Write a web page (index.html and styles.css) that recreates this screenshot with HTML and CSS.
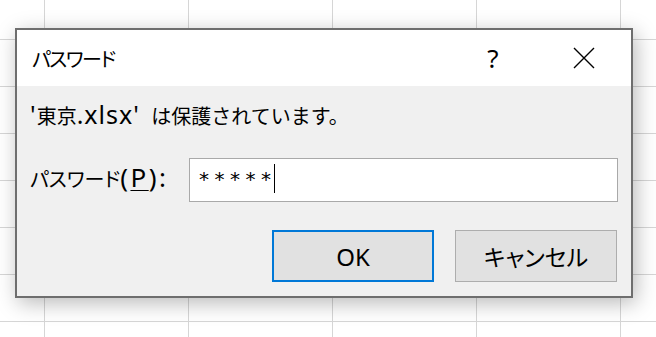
FILE: index.html
```html
<!DOCTYPE html>
<html lang="ja">
<head>
    <meta charset="utf-8">
    <link rel="stylesheet" href="styles.css">
</head>
<body>
    <div class="dialog">
        <div class="titlebar">
            <span class="title">パスワード</span>
            <span class="help">?</span>
            <span class="close">
                <svg width="22" height="22" viewBox="0 0 22 22">
                    <path d="M1 1 L21 21 M21 1 L1 21" stroke="#000" stroke-width="1.4" fill="none"/>
                </svg>
            </span>
        </div>
        <div class="content">
            <p class="message"><span class="lat">'</span>東京<span class="lat">.xlsx' </span>は保護されています。</p>
            <div class="field">
                <label class="field-label" for="pw">パスワード<span class="lat">(<u>P</u>):</span></label>
                <div class="password-box" id="pw"><span class="mask">*****</span><span class="caret"></span></div>
            </div>
            <div class="buttons">
                <button class="btn btn-default">OK</button>
                <button class="btn">キャンセル</button>
            </div>
        </div>
    </div>
</body>
</html>
```

FILE: styles.css
```css
/* Fond : grille de feuille de calcul */
html {
  background-color: #fff;
  background-image:
    linear-gradient(to right, #d6d6d6 1px, transparent 1px),
    linear-gradient(to bottom, #d6d6d6 1px, transparent 1px);
  background-size: 144px 47px;
  background-position: 44px 39px;
}

body {
  margin: 0;
  height: 337px;
  overflow: hidden;
  font-family: "Noto Sans", "Noto Sans CJK JP", sans-serif;
  color: #000;
}

/* Fenêtre */
.dialog {
  width: 618px;
  height: 270px;
  box-sizing: border-box;
  margin: 28px 0 0 15px;
  border: 2px solid #6e6e6e;
  background-color: #f0f0f0;
  display: flex;
  flex-direction: column;
  box-shadow: 3px 5px 20px rgba(0, 0, 0, 0.28);
}

/* Barre de titre */
.titlebar {
  height: 56px;
  flex: none;
  background-color: #fff;
  display: flex;
  align-items: center;
  padding: 0 24px 0 15px;
}

.title {
  flex: 1;
  font-size: 20px;
  letter-spacing: -1.5px;
  font-feature-settings: "palt";
}

.help {
  width: 40px;
  text-align: center;
  font-size: 26px;
  line-height: 30px;
}

.close {
  width: 46px;
  margin-left: 48px;
  display: flex;
  justify-content: center;
}

/* Contenu */
.content {
  flex: 1;
  padding: 17px 13px 0 13px;
}

.message {
  margin: 0;
  font-size: 20px;
  line-height: 28px;
  white-space: pre;
}

.lat {
  font-size: 25px;
  line-height: 20px;
  letter-spacing: 1px;
  word-spacing: 4px;
}

.field {
  display: flex;
  align-items: center;
  margin-top: 27px;
}

.field-label {
  width: 159px;
  font-size: 20px;
  line-height: 30px;
  font-feature-settings: "palt";
}

.field-label .lat {
  font-size: 26px;
  letter-spacing: 2.5px;
}

.field-label u {
  text-underline-offset: 3px;
  text-decoration-thickness: 1px;
}

.password-box {
  width: 429px;
  height: 44px;
  box-sizing: border-box;
  border: 1px solid #a9a9a9;
  background-color: #fff;
  display: flex;
  align-items: flex-start;
  padding: 5px 0 0 9px;
}

.mask {
  font-family: "DejaVu Sans", sans-serif;
  font-size: 20px;
  letter-spacing: 5.5px;
  line-height: 30px;
}

.caret {
  width: 1px;
  height: 29px;
  margin-left: -3px;
  background-color: #000;
}

/* Boutons */
.buttons {
  display: flex;
  justify-content: flex-end;
  gap: 21px;
  margin-top: 28px;
  padding-right: 1px;
}

.btn {
  width: 162px;
  height: 52px;
  box-sizing: border-box;
  background-color: #e1e1e1;
  border: 1px solid #adadad;
  font-family: "Noto Sans", "Noto Sans CJK JP", sans-serif;
  font-size: 23px;
  color: #000;
  padding: 0;
  font-feature-settings: "palt";
}

.btn-default {
  border: 2px solid #0078d7;
  font-size: 24px;
}
```
